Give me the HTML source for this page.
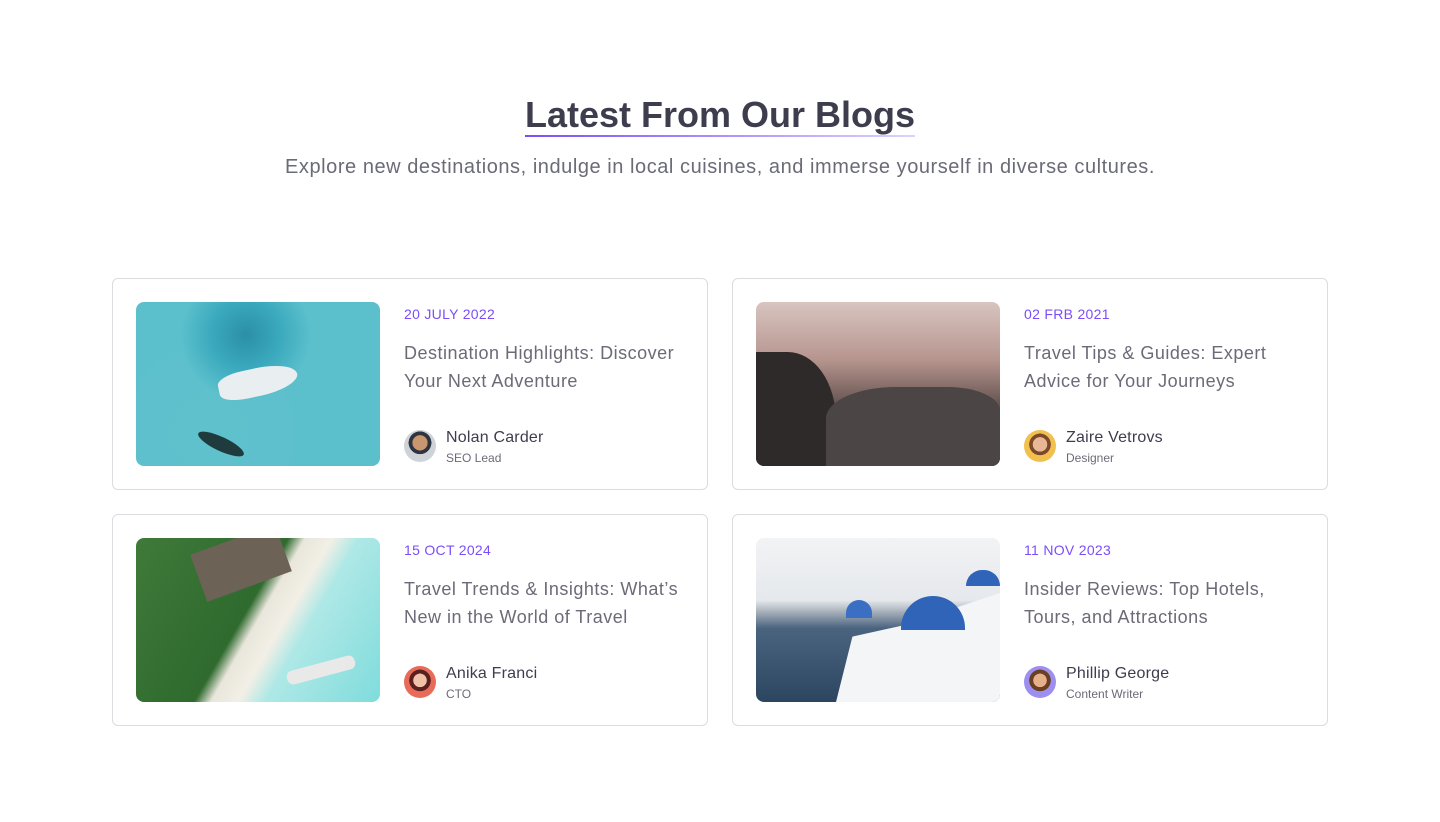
<!DOCTYPE html>
<html><head><meta charset="utf-8"><style>
*{margin:0;padding:0;box-sizing:border-box}
body{width:1440px;height:822px;background:#fff;font-family:"Liberation Sans",sans-serif;position:relative;overflow:hidden}
h1{position:absolute;left:0;right:0;top:94px;text-align:center;font-size:36px;font-weight:bold;color:#3d3d4e;letter-spacing:0}
h1 span{display:inline-block;padding-bottom:0;border-bottom:2px solid;border-image:linear-gradient(90deg,#7a4dfa,#ddd3fd) 1;line-height:40px}
.sub{position:absolute;left:0;right:0;top:156px;text-align:center;font-size:20px;color:#6b6b78;letter-spacing:0.55px}
.card{position:absolute;width:596px;height:212px;border:1px solid #dcdce0;border-radius:6px}
.img{position:absolute;left:23px;top:23px;width:244px;height:164px;border-radius:8px;overflow:hidden}
.date{position:absolute;left:291px;top:27px;font-size:14px;color:#7b4dfa;letter-spacing:0.3px}
.title{position:absolute;left:291px;top:60px;width:285px;font-size:18px;line-height:28px;color:#6b6b78;letter-spacing:0.5px}
.av{position:absolute;left:291px;top:151px;width:32px;height:32px;border-radius:50%}
.name{position:absolute;left:333px;top:150px;font-size:16px;color:#3d3d4e;letter-spacing:0.2px}
.role{position:absolute;left:333px;top:172px;font-size:12px;color:#6b6b78}
</style></head><body>
<h1><span>Latest From Our Blogs</span></h1>
<div class="sub">Explore new destinations, indulge in local cuisines, and immerse yourself in diverse cultures.</div>

<div class="card" style="left:112px;top:278px">
<div class="img" style="background:radial-gradient(circle at 45% 20%,#2b8fa6 0,#3aa9bd 18%,transparent 35%),radial-gradient(circle at 30% 80%,#5fc1cc,transparent 50%),#5cc0cc">
<div style="position:absolute;left:82px;top:66px;width:80px;height:28px;background:#e9eef0;border-radius:40% 60% 60% 40%;transform:rotate(-12deg)"></div>
<div style="position:absolute;left:60px;top:135px;width:50px;height:14px;background:#1f3b3e;border-radius:50%;transform:rotate(25deg)"></div>
</div>
<div class="date">20 JULY 2022</div>
<div class="title">Destination Highlights: Discover Your Next Adventure</div>
<div class="av" style="background:radial-gradient(circle at 50% 40%,#c9966f 0 30%,#2e3440 31%,#2e3440 45%,#cfd3d8 46%)"></div>
<div class="name">Nolan Carder</div><div class="role">SEO Lead</div>
</div>

<div class="card" style="left:732px;top:278px">
<div class="img" style="background:linear-gradient(180deg,#d8c4c0 0,#b7958f 35%,#7c6662 55%,#3c3434 75%,#2a2524 100%)">
<div style="position:absolute;left:0;top:50px;width:80px;height:114px;background:#2f2a2a;border-radius:0 60% 0 0"></div>
<div style="position:absolute;left:70px;top:85px;width:174px;height:79px;background:#4c4545;border-radius:40% 30% 0 0"></div>
</div>
<div class="date">02 FRB 2021</div>
<div class="title">Travel Tips &amp; Guides: Expert Advice for Your Journeys</div>
<div class="av" style="background:radial-gradient(circle at 50% 45%,#e8b896 0 30%,#7a4a2a 31% 45%,#f2c04f 46%)"></div>
<div class="name">Zaire Vetrovs</div><div class="role">Designer</div>
</div>

<div class="card" style="left:112px;top:514px">
<div class="img" style="background:linear-gradient(120deg,#3f7a3a 0,#2f6a2e 45%,#e9e6dc 50%,#f2efe6 58%,#aee8e6 66%,#7fdcdc 100%)">
<div style="position:absolute;left:60px;top:0;width:90px;height:50px;background:#6c6255;transform:rotate(-20deg)"></div>
<div style="position:absolute;left:150px;top:125px;width:70px;height:14px;background:#e9e9e9;border-radius:6px;transform:rotate(-15deg)"></div>
</div>
<div class="date">15 OCT 2024</div>
<div class="title">Travel Trends &amp; Insights: What’s New in the World of Travel</div>
<div class="av" style="background:radial-gradient(circle at 50% 45%,#f0c0a8 0 28%,#5a1f1f 29% 45%,#e86b5a 46%)"></div>
<div class="name">Anika Franci</div><div class="role">CTO</div>
</div>

<div class="card" style="left:732px;top:514px">
<div class="img" style="background:linear-gradient(180deg,#f2f3f5 0,#e5e8ec 38%,#a7b0ba 45%,#4a6480 55%,#2c4660 100%)">
<div style="position:absolute;left:80px;top:55px;width:164px;height:109px;background:#f4f5f7;clip-path:polygon(10% 40%,40% 30%,60% 20%,100% 0,100% 100%,0 100%)"></div>
<div style="position:absolute;left:145px;top:58px;width:64px;height:34px;background:#2f64b8;border-radius:32px 32px 0 0"></div>
<div style="position:absolute;left:90px;top:62px;width:26px;height:18px;background:#3a6fc4;border-radius:13px 13px 0 0"></div>
<div style="position:absolute;left:210px;top:32px;width:34px;height:16px;background:#2f64b8;border-radius:17px 17px 0 0"></div>
</div>
<div class="date">11 NOV 2023</div>
<div class="title">Insider Reviews: Top Hotels, Tours, and Attractions</div>
<div class="av" style="background:radial-gradient(circle at 50% 45%,#e5b08a 0 28%,#6b3f22 29% 45%,#9d8ff0 46%)"></div>
<div class="name">Phillip George</div><div class="role">Content Writer</div>
</div>
</body></html>
